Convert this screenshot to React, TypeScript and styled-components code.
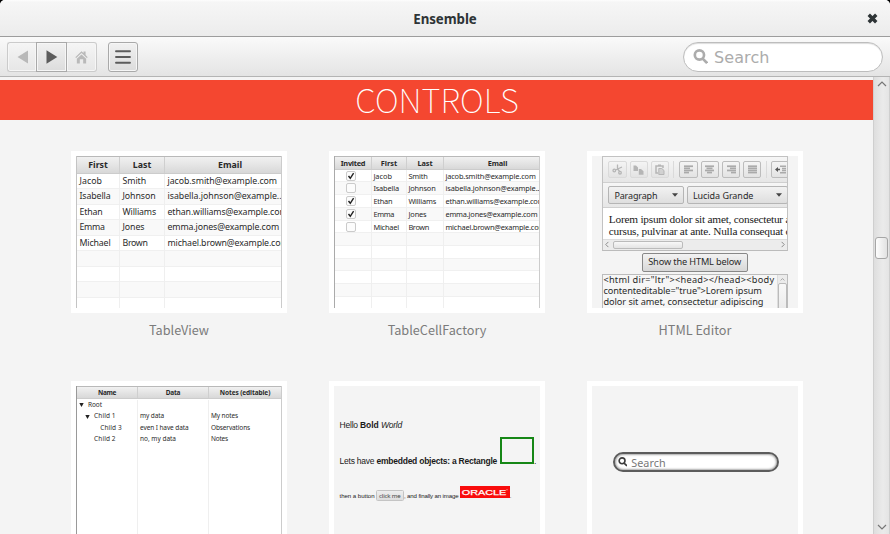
import React, { useLayoutEffect, useRef } from "react";
import styled, { createGlobalStyle, css } from "styled-components";

const Global = createGlobalStyle`
  * { box-sizing: border-box; }
  html, body, #root { margin: 0; height: 100%; overflow: hidden; }
  body { background: #000; font-family: "Noto Sans", "Open Sans", sans-serif; }
`;

/* Text set to a given measure: the tracking is worked out from the natural width. */
const Run = styled.span<{ $b?: boolean; $i?: boolean }>`
  display: inline-block;
  flex: none;
  white-space: pre;
  ${(p) => p.$b && "font-weight: 700;"}
  ${(p) => p.$i && "font-style: italic;"}
`;
function Fit({ w, b, i, children }: { w: number; b?: boolean; i?: boolean; children: string }) {
  const ref = useRef<HTMLSpanElement>(null);
  useLayoutEffect(() => {
    const el = ref.current;
    if (!el) return;
    el.style.letterSpacing = "0px";
    const natural = el.getBoundingClientRect().width;
    el.style.letterSpacing = `${(w - natural) / children.length}px`;
  }, [w, children]);
  return <Run ref={ref} $b={b} $i={i}>{children}</Run>;
}

const Window = styled.div`
  width: 890px;
  height: 534px;
  display: flex;
  flex-direction: column;
  overflow: hidden;
  border-radius: 5px 5px 0 0;
  background: #f4f4f4;
`;
const TitleBar = styled.header`
  height: 37px;
  display: grid;
  grid-template-columns: 36px 1fr 36px;
  align-items: center;
  justify-items: center;
  border-bottom: 1px solid #9d9d9d;
  background: linear-gradient(#fdfdfd 0, #f6f6f6 2px, #ececec 100%);
  color: #2e3436;
  font-size: 13.3px;
  padding-top: 2px;
`;
const Title = styled.h1`
  grid-column: 2;
  margin: 0;
  font-size: inherit;
`;
const CloseIcon = styled.svg`
  width: 11px;
  height: 11px;
  margin: 0 0 2px 0;
`;
const Toolbar = styled.nav`
  height: 40px;
  flex: none;
  display: flex;
  align-items: center;
  padding: 0 7px;
  border-bottom: 1px solid #b4b4b4;
  background: linear-gradient(#fafafa, #e4e4e4);
`;
const Group = styled.div`
  display: flex;
  margin-right: 11px;
`;
const ToolButton = styled.button<{ $off?: boolean; $side?: "l" | "r" | "m" }>`
  width: 30px;
  height: 30px;
  padding: 0;
  display: grid;
  place-items: center;
  color: #5c5c5c;
  border: 1px solid #a9a9a9;
  border-radius: 3px;
  background: linear-gradient(#f1f1f1, #dcdcdc);
  box-shadow: inset 0 0 0 1px #f6f6f6;
  ${(p) => p.$side === "m" && "border-radius: 0; width: 31px;"}
  ${(p) => p.$side === "l" && "border-radius: 3px 0 0 3px; border-right: 0; width: 29px;"}
  ${(p) => p.$side === "r" && "border-radius: 0 3px 3px 0; border-left: 0;"}
  ${(p) => p.$off && css`
    color: #b9b9b9;
    border-color: #cbcbcb;
    background: linear-gradient(#f5f5f5, #e6e6e6);
  `}
`;
const SearchBox = styled.div`
  width: 200px;
  height: 30px;
  margin-left: auto;
  display: flex;
  align-items: center;
  gap: 6px;
  padding: 0 9px;
  border: 1px solid #bdbdbd;
  border-radius: 15px;
  background: #fff;
  box-shadow: inset 0 1px 1px #ddd;
  color: #acacac;
  font: 16px/28px "DejaVu Sans", sans-serif;
  & > span { padding-top: 2px; }
`;
const Body = styled.div`
  flex: 1;
  min-height: 0;
  display: flex;
`;
const Page = styled.main`
  width: 873px;
  padding-top: 3px;
  overflow: hidden;
`;
const Banner = styled.h2`
  margin: 0;
  height: 40px;
  display: flex;
  justify-content: center;
  padding-left: 1px;
  background: #f44730;
  color: #fff;
  font: 100 33px/39px "Noto Sans CJK JP", "Noto Sans CJK SC", sans-serif;
`;
const Gallery = styled.section`
  display: grid;
  grid-template-columns: repeat(3, 216px);
  grid-auto-rows: 230px;
  column-gap: 42px;
  padding: 31px 0 0 71px;
`;
const Tile = styled.figure`
  margin: 0;
`;
const Frame = styled.div`
  width: 216px;
  height: 162px;
  padding: 5px;
  background: #fff;
`;
const Shot = styled.div`
  height: 152px;
  overflow: hidden;
  background: #f4f4f4;
  color: #2a2a2a;
`;
const Caption = styled.figcaption`
  text-align: center;
  color: #7b7b7b;
  font: 12.7px/34px "Noto Sans CJK JP", "Noto Sans CJK SC", sans-serif;
`;

/* Tables */
const Table = styled.div<{ $cols: string; $size: number; $left: string }>`
  height: 152px;
  overflow: hidden;
  background: #fff;
  border-left: 1px solid ${(p) => p.$left};
  border-right: 1px solid #ccc;
  font-size: ${(p) => p.$size}px;
  --cols: ${(p) => p.$cols};
`;
const Head = styled.div<{ $h: number; $lead?: number }>`
  display: grid;
  grid-template-columns: var(--cols);
  height: ${(p) => p.$h}px;
  line-height: ${(p) => p.$h - 1}px;
  border-top: 1px solid #b9b9b9;
  border-bottom: 1px solid #ccc;
  background: linear-gradient(#f1f1f1, #d8d8d8);
  & > div { text-align: center; border-right: 1px solid #cfcfcf; overflow: hidden; }
  & > div:last-child { border-right: 0; padding-left: ${(p) => p.$lead ?? 0}px; }
`;
const Row = styled.div<{ $h: number; $pad: number; $plain?: boolean }>`
  display: grid;
  grid-template-columns: var(--cols);
  height: ${(p) => p.$h}px;
  line-height: ${(p) => p.$h - 0.5}px;
  & > div {
    height: ${(p) => p.$h}px;
    overflow: hidden;
    padding-left: ${(p) => p.$pad}px;
    border-right: 1px solid #efefef;
  }
  & > div:last-child { border-right: 0; }
  ${(p) => !p.$plain && css`
    border-bottom: 1px solid #f0f0f0;
    &:nth-child(odd) { background: #f9f9f9; }
  `}
`;
const Check = styled.span`
  display: grid;
  place-items: center;
  width: 10px;
  height: 10px;
  margin: 1px 0 0 10px;
  border: 1px solid #cbcbcb;
  border-radius: 2px;
  background: #fcfcfc;
`;

const people: [string, number, string, number, string, number, boolean][] = [
  ["Jacob", 22.5, "Smith", 23.5, "jacob.smith@example.com", 109.5, true],
  ["Isabella", 31, "Johnson", 33, "isabella.johnson@example..", 114, false],
  ["Ethan", 23, "Williams", 33.5, "ethan.williams@example.com", 120, true],
  ["Emma", 25, "Jones", 22, "emma.jones@example.com", 111.5, true],
  ["Michael", 31, "Brown", 25, "michael.brown@example.com", 121, false],
];

function TableView() {
  return (
    <Table $cols="43px 45px 1fr" $size={8.8} $left="#c4c4c4">
      <Head $h={17.5} $lead={14}>
        <div><Fit b w={19.5}>First</Fit></div>
        <div><Fit b w={18.5}>Last</Fit></div>
        <div><Fit b w={24}>Email</Fit></div>
      </Head>
      {people.map((p) => (
        <Row key={p[0]} $h={15.5} $pad={2.5}>
          <div><Fit w={p[1]}>{p[0]}</Fit></div>
          <div><Fit w={p[3]}>{p[2]}</Fit></div>
          <div><Fit w={p[5]}>{p[4]}</Fit></div>
        </Row>
      ))}
      {[0, 1, 2, 3].map((n) => (
        <Row key={n} $h={15.5} $pad={2.5}><div /><div /><div /></Row>
      ))}
    </Table>
  );
}

function CellFactory() {
  const k = 0.825;
  return (
    <Table $cols="37px 35px 37px 1fr" $size={7.4} $left="#aaa">
      <Head $h={13.8} $lead={12}>
        <div><Fit b w={24.5}>Invited</Fit></div>
        <div><Fit b w={16.5}>First</Fit></div>
        <div><Fit b w={15}>Last</Fit></div>
        <div><Fit b w={19.5}>Email</Fit></div>
      </Head>
      {people.map((p) => (
        <Row key={p[0]} $h={12.7} $pad={1.4}>
          <div>
            <Check>
              {p[6] && (
                <svg width="8" height="8" viewBox="0 0 8 8">
                  <path d="M1.5 4 3.3 6.3 6.6 1.2" fill="none" stroke="#222" strokeWidth="1.4" />
                </svg>
              )}
            </Check>
          </div>
          <div><Fit w={p[1] * k}>{p[0]}</Fit></div>
          <div><Fit w={p[3] * k}>{p[2]}</Fit></div>
          <div><Fit w={p[5] * k}>{p[4]}</Fit></div>
        </Row>
      ))}
      {[0, 1, 2, 3, 4, 5].map((n) => (
        <Row key={n} $h={12.7} $pad={1.4}><div /><div /><div /><div /></Row>
      ))}
    </Table>
  );
}

const TreeName = styled.span<{ $level: number }>`
  display: flex;
  align-items: center;
  gap: 4px;
  padding-left: ${(p) => p.$level * 6.1}px;
`;
const Arrow = () => (
  <svg width="5" height="4" viewBox="0 0 5 4"><path d="M.3 0h4.4L2.5 4z" fill="#222" /></svg>
);
const NoArrow = styled.i`
  width: 5px;
`;
const TreeBody = styled.div`
  & > div:first-child { margin-top: 0.8px; }
`;
const tree: [number, boolean, string, number, string, number, string, number][] = [
  [0, true, "Root", 14, "", 0, "", 0],
  [1, true, "Child 1", 21.5, "my data", 24, "My notes", 27],
  [2, false, "Child 3", 21.5, "even I have data", 48.5, "Observations", 39],
  [1, false, "Child 2", 21.5, "no, my data", 36, "Notes", 17],
];
function TreeTable() {
  return (
    <Table $cols="61px 71px 1fr" $size={6.5} $left="#999">
      <Head $h={13}>
        <div><Fit b w={18}>Name</Fit></div>
        <div><Fit b w={14.5}>Data</Fit></div>
        <div><Fit b w={50.5}>Notes (editable)</Fit></div>
      </Head>
      <TreeBody>
        {tree.map((t) => (
          <Row key={t[2]} $h={11.4} $pad={2} $plain>
            <div>
              <TreeName $level={t[0]}>{t[1] ? <Arrow /> : <NoArrow />}<Fit w={t[3]}>{t[2]}</Fit></TreeName>
            </div>
            <div>{t[4] && <Fit w={t[5]}>{t[4]}</Fit>}</div>
            <div>{t[6] && <Fit w={t[7]}>{t[6]}</Fit>}</div>
          </Row>
        ))}
        <Row $h={100} $pad={2} $plain><div /><div /><div /></Row>
      </TreeBody>
    </Table>
  );
}

/* HTML editor */
const Editor = styled.div`
  width: 186px;
  margin-left: 10.4px;
  border: 1px solid #c2c2c2;
  border-bottom-color: #bbb;
  overflow: hidden;
`;
const EditorBar = styled.div<{ $h: number }>`
  height: ${(p) => p.$h}px;
  display: flex;
  align-items: center;
  gap: 3px;
  padding: 0 5px;
  border-bottom: 1px solid #cfcfcf;
  background: linear-gradient(#f6f6f6, #e6e6e6);
`;
const MiniButton = styled.span<{ $off?: boolean }>`
  flex: none;
  width: 18.3px;
  height: 17.5px;
  display: grid;
  place-items: center;
  border: 1px solid ${(p) => (p.$off ? "#dadada" : "#bcbcbc")};
  border-radius: 2px;
  background: linear-gradient(#f4f4f4, #e3e3e3);
  color: ${(p) => (p.$off ? "#b5b5b5" : "#aaa")};
`;
const Divider = styled.i`
  flex: none;
  width: 1px;
  height: 17px;
  margin: 0 1.8px 0 1.2px;
  background: #dadada;
`;
const Combo = styled.div<{ $w: number }>`
  flex: none;
  width: ${(p) => p.$w}px;
  height: 17.5px;
  display: flex;
  align-items: center;
  justify-content: space-between;
  padding: 0 5px;
  border: 1px solid #b5b5b5;
  border-radius: 2px;
  background: linear-gradient(#f2f2f2, #dedede);
  font-size: 9px;
`;
const Prose = styled.div`
  height: 31px;
  padding: 4.8px 0 0 5.4px;
  background: #fff;
  overflow: hidden;
  white-space: nowrap;
  color: #1a1a1a;
  font: 11.3px/12px "Liberation Serif", serif;
`;
const HScroll = styled.div`
  height: 10.5px;
  display: flex;
  align-items: center;
  padding: 0 1px;
  gap: 2px;
  background: #ececec;
  border-top: 1px solid #ddd;
  & > svg:last-child { margin-left: auto; }
`;
const Thumb = styled.i<{ $w: number; $h: number }>`
  flex: none;
  width: ${(p) => p.$w}px;
  height: ${(p) => p.$h}px;
  border: 1px solid #bbb;
  border-radius: 2px;
  background: linear-gradient(#f8f8f8, #e4e4e4);
`;
const ShowButton = styled.div`
  width: 106px;
  height: 18.5px;
  margin: 2.7px 0 2.7px 49.7px;
  line-height: 16.5px;
  text-align: center;
  border: 1px solid #888;
  border-radius: 2px;
  background: linear-gradient(#f2f2f2, #d8d8d8);
  font-size: 9.2px;
`;
const Source = styled.div`
  width: 186px;
  height: 50px;
  margin-left: 10.4px;
  display: flex;
  justify-content: space-between;
  border: 1px solid #bcbcbc;
  background: #f6f6f6;
  font-size: 9.2px;
  line-height: 10.7px;
`;
const SourceText = styled.div`
  display: flex;
  flex-direction: column;
  align-items: flex-start;
`;
const SourceScroll = styled.div`
  width: 10.5px;
  display: flex;
  flex-direction: column;
  align-items: center;
  gap: 1px;
  padding-top: 2px;
  border-left: 1px solid #ddd;
  background: #ebebeb;
`;
function Chevron({ d }: { d: "l" | "r" | "u" | "d" }) {
  const path = { l: "M5 1 2 4l3 3", r: "M3 1l3 3-3 3", u: "M1 5.5 4 2.5l3 3", d: "M1 2.5l3 3 3-3" }[d];
  return (
    <svg width="7" height="7" viewBox="0 0 8 8"><path d={path} fill="none" stroke="#888" strokeWidth="1.1" /></svg>
  );
}
function Lines({ x, w }: { x: number[]; w: number[] }) {
  return (
    <svg width="11" height="9" viewBox="0 0 11 9" fill="currentColor">
      {x.map((v, n) => <rect key={n} x={v} y={n * 2.1 + 0.4} width={w[n]} height="1.7" />)}
    </svg>
  );
}
const DropArrow = () => (
  <svg width="6" height="4" viewBox="0 0 6 4"><path d="M0 .3h6L3 3.8z" fill="#444" /></svg>
);

function HtmlEditor() {
  return (
    <>
      <Editor>
        <EditorBar $h={26}>
          <MiniButton $off>
            <svg width="11" height="11" viewBox="0 0 11 11" fill="none" stroke="currentColor" strokeWidth="1.3">
              <path d="M5.5 .5v5M10 3 3.5 6M5.5 5l2 2.3" /><circle cx="2.3" cy="6.5" r="1.3" /><circle cx="8" cy="8.7" r="1.3" />
            </svg>
          </MiniButton>
          <MiniButton $off>
            <svg width="11" height="10" viewBox="0 0 11 10" fill="currentColor">
              <path d="M.5.5H3L5 2.5V6H.5zM5.8 4H8l2.5 2.3V9.8H5.8z" />
            </svg>
          </MiniButton>
          <MiniButton $off>
            <svg width="10" height="11" viewBox="0 0 10 11" fill="none" stroke="currentColor">
              <path d="M3 9H1V2h7v2M3 1.2h3" strokeWidth="1.5" /><path d="M3.8 4.5h3L9 6.5v4H3.8z" fill="currentColor" fillOpacity=".45" />
            </svg>
          </MiniButton>
          <Divider />
          <MiniButton><Lines x={[1, 1, 1, 1]} w={[9, 6, 9, 5]} /></MiniButton>
          <MiniButton><Lines x={[1, 2.5, 1, 3]} w={[9, 6, 9, 5]} /></MiniButton>
          <MiniButton><Lines x={[1, 4, 1, 5]} w={[9, 6, 9, 5]} /></MiniButton>
          <MiniButton><Lines x={[1, 1, 1, 1]} w={[9, 9, 9, 9]} /></MiniButton>
          <Divider />
          <MiniButton>
            <svg width="11" height="9" viewBox="0 0 11 9">
              <path d="M0 4.5 3 2v1.8h2v1.4H3V7z" fill="#555" />
              <path d="M5 1.2h6M7 3.4h4M7 5.6h4M5 7.8h6" stroke="#aaa" strokeWidth="1.5" />
            </svg>
          </MiniButton>
        </EditorBar>
        <EditorBar $h={25}>
          <Combo $w={75.5}><Fit w={43}>Paragraph</Fit><DropArrow /></Combo>
          <Combo $w={101}><Fit w={60.5}>Lucida Grande</Fit><DropArrow /></Combo>
        </EditorBar>
        <Prose>
          <div><Fit w={181.5}>Lorem ipsum dolor sit amet, consectetur a</Fit></div>
          <div><Fit w={181.5}>cursus, pulvinar at ante. Nulla consequat c</Fit></div>
        </Prose>
        <HScroll><Chevron d="l" /><Thumb $w={70} $h={8.5} /><Chevron d="r" /></HScroll>
      </Editor>
      <ShowButton><Fit w={93}>Show the HTML below</Fit></ShowButton>
      <Source>
        <SourceText>
          <Fit w={171}>{'<html dir="ltr"><head></head><body'}</Fit>
          <Fit w={158.5}>{'contenteditable="true">Lorem ipsum'}</Fit>
          <Fit w={160}>dolor sit amet, consectetur adipiscing</Fit>
        </SourceText>
        <SourceScroll><Chevron d="u" /><Thumb $w={8.5} $h={40} /></SourceScroll>
      </Source>
    </>
  );
}

/* Rich text */
const RichText = styled.div`
  padding: 0 0 0 5.5px;
  color: #1a1a1a;
  font-family: "Liberation Sans", sans-serif;
`;
const RichLine = styled.div<{ $h: number; $size: number }>`
  height: ${(p) => p.$h}px;
  display: flex;
  align-items: baseline;
  align-content: flex-end;
  flex-wrap: wrap;
  font-size: ${(p) => p.$size}px;
  line-height: 10px;
  white-space: pre;
`;
const GreenBox = styled.i`
  width: 34.5px;
  height: 26.5px;
  margin-left: 2.6px;
  border: 2px solid #168716;
`;
const ClickMe = styled.span`
  width: 28.5px;
  height: 10.5px;
  margin: 0 0 0 1px;
  text-align: center;
  line-height: 9px;
  border: 1px solid #c4c4c4;
  border-radius: 1.5px;
  background: linear-gradient(#eee, #ddd);
  color: #444;
  font-family: "Noto Sans", sans-serif;
  font-size: 6.1px;
`;
const Oracle = styled.svg`
  width: 50px;
  height: 12.5px;
  margin-left: 1.2px;
`;
function Rich() {
  return (
    <RichText>
      <RichLine $h={44} $size={8.5}>
        <Fit w={20.5}>Hello </Fit><Fit b w={21}>Bold </Fit><Fit i w={21}>World</Fit>
      </RichLine>
      <RichLine $h={35.5} $size={8.5}>
        <Fit w={37}>Lets have </Fit><Fit b w={120.5}>embedded objects: a Rectangle</Fit><GreenBox />.
      </RichLine>
      <RichLine $h={35.5} $size={6.1}>
        <Fit w={35}>then a button</Fit><ClickMe><Fit w={21.5}>click me</Fit></ClickMe>
        <Fit w={54.5}>, and finally an image</Fit>
        <Oracle viewBox="0 0 50 12.5">
          <rect width="50" height="12.5" fill="#f90c0c" />
          <text x="1.8" y="8.9" fill="#fff" fontSize="8" textLength="44.5" lengthAdjust="spacingAndGlyphs" fontFamily="Liberation Sans, sans-serif" stroke="#fff" strokeWidth=".25">ORACLE</text>
          <circle cx="47" cy="3.8" r=".5" fill="#fff" />
        </Oracle>.
      </RichLine>
    </RichText>
  );
}

const PillField = styled.div`
  width: 166px;
  height: 20.5px;
  margin: 65.6px 0 0 20.7px;
  display: flex;
  align-items: center;
  gap: 4px;
  padding-left: 3px;
  border: 2px solid #5c5c5c;
  border-radius: 11px;
  background: #fff;
  box-shadow: inset 0 0 2px 1px #aaa;
  color: #777;
  font-size: 10.8px;
  line-height: 16px;
  & > span:last-child { padding-top: 1.5px; }
`;
const Center = styled.div`
  display: flow-root;
`;
function Lens({ size, w }: { size: number; w: number }) {
  return (
    <svg width={size} height={size} viewBox="0 0 14 14" fill="none" stroke="currentColor" strokeWidth={w}>
      <circle cx="6" cy="5.6" r="4.3" />
      <path d="M9 9l4.2 4.2" />
    </svg>
  );
}
const DarkLens = styled.span`
  display: flex;
  color: #3c3c3c;
`;

/* Scrollbar */
const ScrollBar = styled.aside`
  width: 17px;
  display: flex;
  flex-direction: column;
  align-items: center;
  padding: 2px 0 2px;
  border-left: 1px solid #cfcfcf;
  border-right: 1px solid #cfcfcf;
  background: linear-gradient(90deg, #dedede, #ebebeb 60%, #e4e4e4);
`;
const Handle = styled.i`
  width: 13px;
  height: 22px;
  margin-top: 148px;
  margin-bottom: auto;
  border: 1px solid #a6a6a6;
  border-radius: 3px;
  background: linear-gradient(90deg, #fdfdfd, #e2e2e2);
`;
const ScrollArrow = ({ d }: { d: string }) => (
  <svg width="10" height="10" viewBox="0 0 10 10"><path d={d} fill="none" stroke="#777" strokeWidth="1.2" /></svg>
);

const TileOf = ({ name, children }: { name: string; children: React.ReactNode }) => (
  <Tile>
    <Frame><Shot>{children}</Shot></Frame>
    <Caption>{name}</Caption>
  </Tile>
);

export default function App() {
  return (
    <>
      <Global />
      <Window>
        <TitleBar>
          <Title><Fit b w={63.5}>Ensemble</Fit></Title>
          <CloseIcon viewBox="0 0 10 10">
            <path d="M1.6 1.6l6.8 6.8M8.4 1.6L1.6 8.4" stroke="#2e3436" strokeWidth="3.1" />
          </CloseIcon>
        </TitleBar>
        <Toolbar>
          <Group>
            <ToolButton $off $side="l">
              <svg width="12" height="14" viewBox="0 0 12 14"><path d="M12 .5v13L1.5 7z" fill="currentColor" /></svg>
            </ToolButton>
            <ToolButton $side="m">
              <svg width="12" height="14" viewBox="0 0 12 14"><path d="M.5 .3v13.4L11.3 7z" fill="currentColor" /></svg>
            </ToolButton>
            <ToolButton $off $side="r">
              <svg width="13" height="14" viewBox="0 0 14 14" fill="currentColor">
                <path d="M.3 7.2 7 .8l2.2 2V1.2h2.2v3.7l2.3 2.3-1 1L7 2.8 1.3 8.2z" />
                <path d="M2 9 7 4.3 12 9v5H8.8V9.3H5.2V14H2z" />
              </svg>
            </ToolButton>
          </Group>
          <ToolButton>
            <svg width="16" height="14" viewBox="0 0 16 14">
              <path d="M1 1.3h14M1 7h14M1 12.7h14" stroke="currentColor" strokeWidth="1.9" strokeLinecap="round" />
            </svg>
          </ToolButton>
          <SearchBox><Lens size={15} w={2.5} /><Fit w={55.5}>Search</Fit></SearchBox>
        </Toolbar>
        <Body>
          <Page>
            <Banner><Fit w={163.5}>CONTROLS</Fit></Banner>
            <Gallery>
              <TileOf name="TableView"><TableView /></TileOf>
              <TileOf name="TableCellFactory"><CellFactory /></TileOf>
              <TileOf name="HTML Editor"><HtmlEditor /></TileOf>
              <TileOf name="TreeTableView"><TreeTable /></TileOf>
              <TileOf name="TextFlow"><Rich /></TileOf>
              <TileOf name="SearchBox">
                <Center>
                  <PillField><DarkLens><Lens size={9.5} w={2.4} /></DarkLens><Fit w={34.5}>Search</Fit></PillField>
                </Center>
              </TileOf>
            </Gallery>
          </Page>
          <ScrollBar>
            <ScrollArrow d="M1 7l4-4 4 4" />
            <Handle />
            <ScrollArrow d="M1 3l4 4 4-4" />
          </ScrollBar>
        </Body>
      </Window>
    </>
  );
}
